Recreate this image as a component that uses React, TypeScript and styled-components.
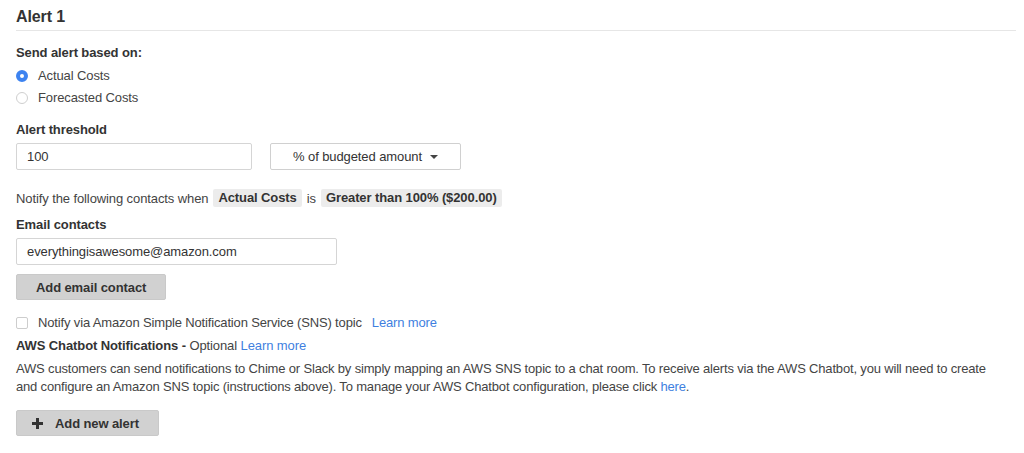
import styled, { createGlobalStyle } from 'styled-components';

const GlobalStyle = createGlobalStyle`
  body {
    margin: 0;
    background: #fff;
    font-family: "Liberation Sans", Arial, sans-serif;
    font-size: 13px;
    letter-spacing: -0.1px;
    color: #444;
  }
`;

const Container = styled.div`
  padding: 0 8px 0 16px;
`;

const Title = styled.h2`
  margin: 0;
  padding: 7px 0 3px;
  font-size: 16px;
  line-height: 20px;
  font-weight: bold;
  color: #333;
  border-bottom: 1px solid #e6e6e6;
`;

const Label = styled.div<{ $top: number }>`
  margin-top: ${(p) => p.$top}px;
  font-weight: bold;
  color: #333;
  line-height: 18px;
`;

const RadioGroup = styled.div`
  margin-top: 3px;
`;

const RadioRow = styled.label`
  display: flex;
  align-items: center;
  gap: 10px;
  height: 22px;
  line-height: 18px;
`;

const RadioDot = styled.span<{ $checked?: boolean }>`
  box-sizing: border-box;
  width: 12px;
  height: 12px;
  border-radius: 50%;
  background: #fff;
  border: ${(p) => (p.$checked ? '4px solid #3d83f0' : '1px solid #cfcfcf')};
`;

const Row = styled.div`
  display: flex;
  gap: 18px;
  margin-top: 4px;
`;

const TextInput = styled.div<{ $width: number }>`
  box-sizing: border-box;
  width: ${(p) => p.$width}px;
  height: 27px;
  padding: 0 10px;
  display: flex;
  align-items: center;
  border: 1px solid #d5d5d5;
  border-radius: 2px;
  background: #fff;
  color: #333;
`;

const Select = styled.div`
  box-sizing: border-box;
  width: 191px;
  height: 27px;
  display: flex;
  align-items: center;
  justify-content: center;
  gap: 8px;
  border: 1px solid #d0d0d0;
  border-radius: 2px;
  background: #fff;
  color: #333;
`;

const Caret = styled.span`
  width: 0;
  height: 0;
  border-left: 4px solid transparent;
  border-right: 4px solid transparent;
  border-top: 4px solid #444;
  margin-top: 1px;
`;

const NotifyLine = styled.div`
  margin-top: 18px;
  display: flex;
  align-items: center;
  height: 20px;
  gap: 5px;
`;

const Tag = styled.span`
  background: #ececec;
  font-weight: bold;
  color: #333;
  padding: 0 5px;
  line-height: 18px;
  border-radius: 2px;
`;

const EmailWrap = styled.div`
  margin-top: 4px;
`;

const Button = styled.button<{ $top: number; $icon?: boolean }>`
  display: flex;
  align-items: center;
  gap: 12px;
  margin-top: ${(p) => p.$top}px;
  height: 26px;
  padding: 0 19px 0 ${(p) => (p.$icon ? 15 : 19)}px;
  border: 1px solid #c9c9c9;
  border-radius: 2px;
  background: #d1d1d1;
  font-family: inherit;
  font-size: 13px;
  letter-spacing: -0.1px;
  font-weight: bold;
  color: #333;
  cursor: pointer;
`;

const CheckRow = styled.label`
  margin-top: 14px;
  display: flex;
  align-items: center;
  gap: 10px;
  line-height: 18px;
  letter-spacing: -0.15px;
`;

const CheckBox = styled.span`
  box-sizing: border-box;
  width: 12px;
  height: 12px;
  border: 1px solid #cdcdcd;
  border-radius: 2px;
  background: #fff;
`;

const Link = styled.a`
  color: #3f7fe0;
  text-decoration: none;
`;

const ChatbotLine = styled.div`
  margin-top: 5px;
  line-height: 18px;
`;

const Strong = styled.b`
  color: #333;
`;

const Paragraph = styled.p`
  margin: 5px 0 0;
  max-width: 980px;
  line-height: 18px;
  letter-spacing: -0.17px;
`;

const PlusIcon = () => (
  <svg width="11" height="11" viewBox="0 0 11 11">
    <rect x="4" y="0" width="3" height="11" fill="#333" />
    <rect x="0" y="4" width="11" height="3" fill="#333" />
  </svg>
);

const App = () => {
  return (
    <Container>
      <GlobalStyle />
      <Title>Alert 1</Title>
      <Label $top={13}>Send alert based on:</Label>
      <RadioGroup>
        <RadioRow>
          <RadioDot $checked />
          Actual Costs
        </RadioRow>
        <RadioRow>
          <RadioDot />
          Forecasted Costs
        </RadioRow>
      </RadioGroup>
      <Label $top={12}>Alert threshold</Label>
      <Row>
        <TextInput $width={236}>100</TextInput>
        <Select>
          % of budgeted amount
          <Caret />
        </Select>
      </Row>
      <NotifyLine>
        Notify the following contacts when <Tag>Actual Costs</Tag> is{' '}
        <Tag>Greater than 100% ($200.00)</Tag>
      </NotifyLine>
      <Label $top={8}>Email contacts</Label>
      <EmailWrap>
        <TextInput $width={321}>everythingisawesome@amazon.com</TextInput>
      </EmailWrap>
      <Button $top={9}>Add email contact</Button>
      <CheckRow>
        <CheckBox />
        Notify via Amazon Simple Notification Service (SNS) topic
        <Link href="#">Learn more</Link>
      </CheckRow>
      <ChatbotLine>
        <Strong>AWS Chatbot Notifications - </Strong>Optional <Link href="#">Learn more</Link>
      </ChatbotLine>
      <Paragraph>
        AWS customers can send notifications to Chime or Slack by simply mapping an AWS SNS topic to a chat room. To
        receive alerts via the AWS Chatbot, you will need to create and configure an Amazon SNS topic (instructions
        above). To manage your AWS Chatbot configuration, please click <Link href="#">here</Link>.
      </Paragraph>
      <Button $top={14} $icon>
        <PlusIcon />
        Add new alert
      </Button>
    </Container>
  );
};

export default App;
